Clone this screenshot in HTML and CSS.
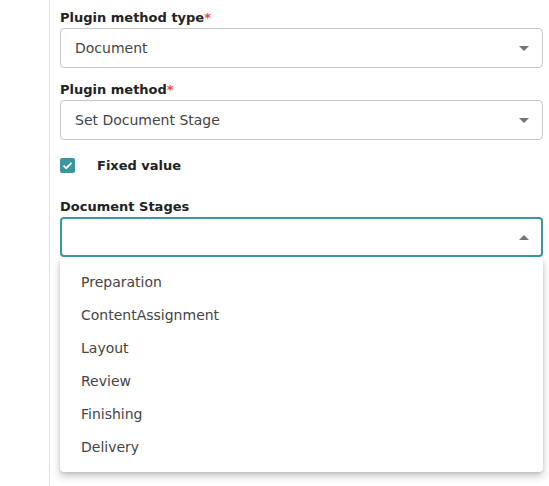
FILE: index.html
```html
<!DOCTYPE html>
<html lang="en">
<head>
    <meta charset="UTF-8">
    <meta name="viewport" content="width=device-width, initial-scale=1.0">
    <title>Plugin settings</title>

    <link rel="stylesheet" href="styles.css">
</head>
<body>
    <div class="pagina">
        <div class="lateral"></div>

        <div class="formulario">
            <div class="campo">
                <label class="etiqueta">Plugin method type<span class="requerido">*</span></label>
                <div class="selector">
                    <span>Document</span>
                    <span class="flecha"></span>
                </div>
            </div>

            <div class="campo">
                <label class="etiqueta">Plugin method<span class="requerido">*</span></label>
                <div class="selector">
                    <span>Set Document Stage</span>
                    <span class="flecha"></span>
                </div>
            </div>

            <div class="fijo">
                <span class="casilla">
                    <svg width="11" height="9" viewBox="0 0 11 9">
                        <path d="M1.5 4.6 L4.2 7.2 L9.5 1.8" fill="none" stroke="#fff" stroke-width="1.8"/>
                    </svg>
                </span>
                <span class="fijo-texto">Fixed value</span>
            </div>

            <div class="campo">
                <label class="etiqueta">Document Stages</label>
                <div class="selector abierto">
                    <span></span>
                    <span class="flecha arriba"></span>
                </div>

                <!-- Lista desplegada encima del resto -->
                <ul class="opciones">
                    <li>Preparation</li>
                    <li>ContentAssignment</li>
                    <li>Layout</li>
                    <li>Review</li>
                    <li>Finishing</li>
                    <li>Delivery</li>
                </ul>
            </div>
        </div>
    </div>
</body>
</html>
```

FILE: styles.css
```css
body {
    margin: 0;
    background-color: #ffffff;
    font-family: "DejaVu Sans", sans-serif;
    color: #444444;
}

.pagina {
    display: flex;
    height: 486px;
    overflow: hidden;
}

.lateral {
    width: 49px;
    border-right: 1px solid #e2e2e2;
    flex-shrink: 0;
}

.formulario {
    flex: 1;
    padding: 9px 6px 0 10px;
}

.campo {
    position: relative;
    margin-bottom: 13px;
}

.etiqueta {
    display: block;
    font-size: 13px;
    font-weight: bold;
    color: #222222;
    line-height: 18px;
    margin-bottom: 1px;
}

.campo:last-child .etiqueta {
    line-height: 16px;
    margin-bottom: 2px;
}

.requerido {
    color: #f04a3a;
}

.selector {
    display: flex;
    align-items: center;
    justify-content: space-between;
    height: 38px;
    border: 1px solid #c6c6c6;
    border-radius: 4px;
    padding: 0 13px 0 14px;
    font-size: 14px;
    color: #444444;
}

.flecha {
    width: 0;
    height: 0;
    border-left: 5px solid transparent;
    border-right: 5px solid transparent;
    border-top: 5px solid #757575;
}

.flecha.arriba {
    border-top: none;
    border-bottom: 5px solid #757575;
}

.selector.abierto {
    height: 36px;
    border: 2px solid #3a979c;
    padding: 0 12px 0 13px;
}

.fijo {
    display: flex;
    align-items: center;
    margin: 18px 0 26px 0;
}

.casilla {
    display: flex;
    align-items: center;
    justify-content: center;
    width: 15px;
    height: 15px;
    background-color: #3a979c;
    border-radius: 2px;
}

.fijo-texto {
    margin-left: 22px;
    font-size: 13px;
    font-weight: bold;
    color: #222222;
}

.opciones {
    position: absolute;
    top: 59px;
    left: 0;
    right: 0;
    margin: 0;
    padding: 8px 0;
    list-style: none;
    background-color: #ffffff;
    border-radius: 4px;
    box-shadow: 0 4px 8px rgba(0, 0, 0, 0.22), 0 1px 3px rgba(0, 0, 0, 0.12);
}

.opciones li {
    height: 33px;
    line-height: 33px;
    padding-left: 21px;
    font-size: 14px;
    color: #444444;
}
```
